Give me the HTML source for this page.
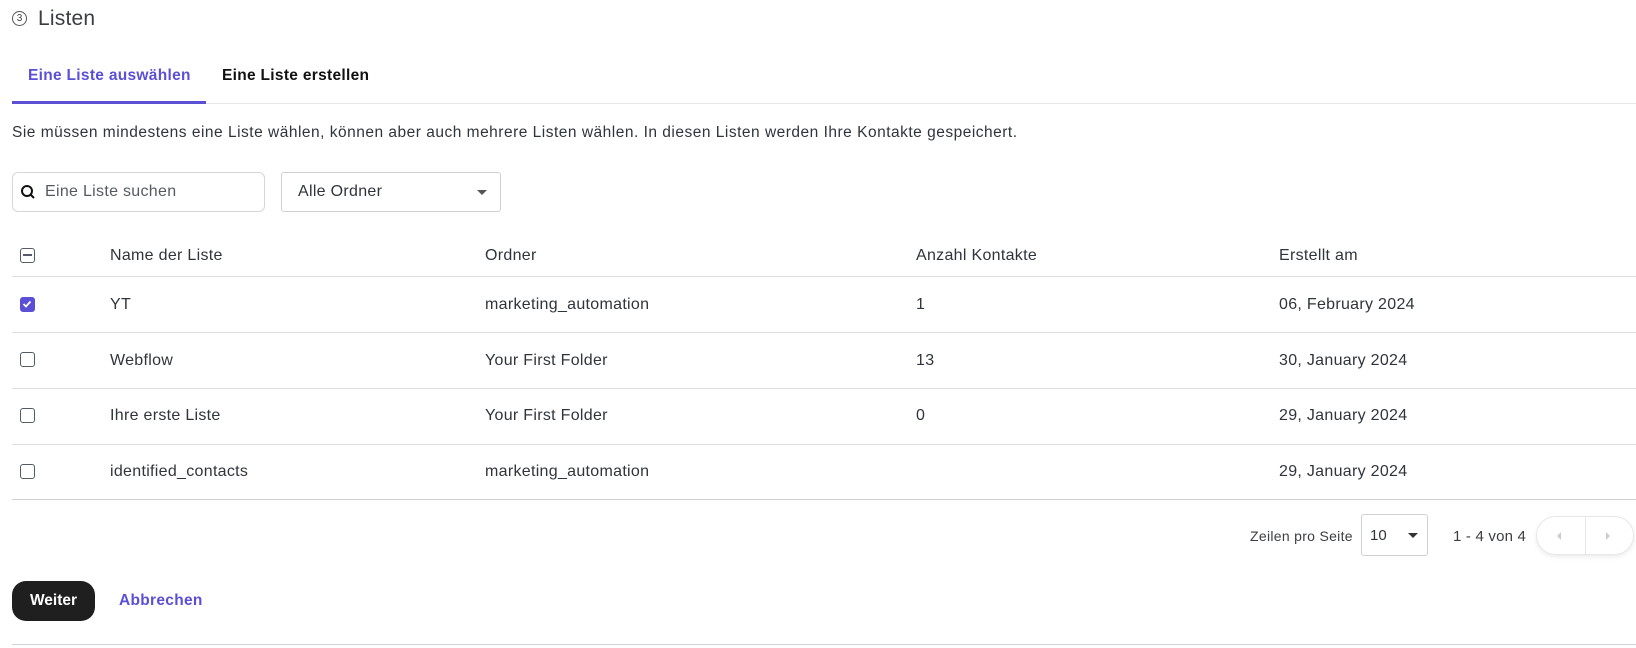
<!DOCTYPE html>
<html><head><meta charset="utf-8"><style>
*{box-sizing:border-box;margin:0;padding:0}
body{width:1636px;height:648px;background:#fff;font-family:"Liberation Sans",sans-serif;color:#1f2328;position:relative;overflow:hidden}
.a{position:absolute;white-space:nowrap}
.line{position:absolute;height:1px;background:#dcdde0}
.cb{position:absolute;width:15px;height:15px;border:1.5px solid #555b66;border-radius:3px;left:20px}
.cell{position:absolute;font-size:16px;letter-spacing:0.3px;color:#30343b;transform:translateY(-50%)}
</style></head><body>
<div class="a" style="left:12px;top:11px;width:15px;height:15px;border:1.2px solid #555;border-radius:50%;font-size:10px;line-height:13px;text-align:center;color:#444">3</div>
<div class="a" style="left:38px;top:7px;font-size:21px;letter-spacing:0.2px;color:#3a3d42">Listen</div>

<div class="a" style="left:28px;top:67px;font-size:15.5px;letter-spacing:0.3px;font-weight:bold;color:#5b4fd6">Eine Liste auswählen</div>
<div class="a" style="left:222px;top:67px;font-size:15.5px;letter-spacing:0.3px;font-weight:bold;color:#111">Eine Liste erstellen</div>
<div class="line" style="left:12px;top:103px;width:1624px;background:#e6e7ea"></div>
<div class="a" style="left:12px;top:101px;width:194px;height:3px;background:#5b4fd6"></div>

<div class="a" style="left:12px;top:124px;font-size:15.5px;letter-spacing:0.5px;color:#30343b">Sie müssen mindestens eine Liste wählen, können aber auch mehrere Listen wählen. In diesen Listen werden Ihre Kontakte gespeichert.</div>

<div class="a" style="left:12px;top:172px;width:253px;height:40px;border:1px solid #d4d6da;border-radius:6px"></div>
<svg class="a" style="left:20px;top:184px" width="16" height="16" viewBox="0 0 16 16"><circle cx="7" cy="7" r="5" fill="none" stroke="#111" stroke-width="2"/><path d="M10.5 10.5L14 14" stroke="#111" stroke-width="2"/></svg>
<div class="a" style="left:45px;top:183px;font-size:16px;letter-spacing:0.3px;color:#555a62">Eine Liste suchen</div>

<div class="a" style="left:281px;top:172px;width:220px;height:40px;border:1px solid #cfd1d5;border-radius:3px"></div>
<div class="a" style="left:298px;top:183px;font-size:16px;letter-spacing:0.3px;color:#30343b">Alle Ordner</div>
<div class="a" style="left:477px;top:190px;border-left:5px solid transparent;border-right:5px solid transparent;border-top:5px solid #555"></div>

<div class="cb" style="top:248px"><div style="position:absolute;left:2px;right:2px;top:5px;height:1.5px;background:#555b66"></div></div>
<div class="cell" style="left:110px;top:256px">Name der Liste</div>
<div class="cell" style="left:485px;top:256px">Ordner</div>
<div class="cell" style="left:916px;top:256px">Anzahl Kontakte</div>
<div class="cell" style="left:1279px;top:256px">Erstellt am</div>
<div class="line" style="left:12px;top:276px;width:1624px"></div>

<div class="cb" style="top:297px;background:#5b4fd6;border-color:#5b4fd6"><svg width="12" height="12" viewBox="0 0 12 12" style="position:absolute;left:0;top:0"><path d="M2.5 6l2.5 2.5 4.5-5" fill="none" stroke="#fff" stroke-width="1.8"/></svg></div>
<div class="cell" style="left:110px;top:305px">YT</div>
<div class="cell" style="left:485px;top:305px">marketing_automation</div>
<div class="cell" style="left:916px;top:305px">1</div>
<div class="cell" style="left:1279px;top:305px">06, February 2024</div>
<div class="line" style="left:12px;top:332px;width:1624px"></div>

<div class="cb" style="top:352px"></div>
<div class="cell" style="left:110px;top:361px">Webflow</div>
<div class="cell" style="left:485px;top:361px">Your First Folder</div>
<div class="cell" style="left:916px;top:361px">13</div>
<div class="cell" style="left:1279px;top:361px">30, January 2024</div>
<div class="line" style="left:12px;top:388px;width:1624px"></div>

<div class="cb" style="top:408px"></div>
<div class="cell" style="left:110px;top:416px">Ihre erste Liste</div>
<div class="cell" style="left:485px;top:416px">Your First Folder</div>
<div class="cell" style="left:916px;top:416px">0</div>
<div class="cell" style="left:1279px;top:416px">29, January 2024</div>
<div class="line" style="left:12px;top:444px;width:1624px"></div>

<div class="cb" style="top:464px"></div>
<div class="cell" style="left:110px;top:472px">identified_contacts</div>
<div class="cell" style="left:485px;top:472px">marketing_automation</div>
<div class="cell" style="left:1279px;top:472px">29, January 2024</div>
<div class="line" style="left:12px;top:499px;width:1624px;background:#cfd1d5"></div>

<div class="a" style="left:1250px;top:528px;font-size:14px;letter-spacing:0.3px;color:#3a3d42">Zeilen pro Seite</div>
<div class="a" style="left:1361px;top:514px;width:67px;height:42px;border:1px solid #cfd1d5;border-radius:3px"></div>
<div class="a" style="left:1370px;top:527px;font-size:15px;color:#30343b">10</div>
<div class="a" style="left:1408px;top:533px;border-left:5px solid transparent;border-right:5px solid transparent;border-top:5px solid #333"></div>
<div class="a" style="left:1453px;top:528px;font-size:15px;letter-spacing:0.2px;color:#3a3d42">1 - 4 von 4</div>
<div class="a" style="left:1536px;top:516px;width:98px;height:39px;border:1px solid #e6e7ea;border-radius:20px;box-shadow:0 2px 4px rgba(0,0,0,0.08)"></div>
<div class="a" style="left:1585px;top:516px;width:1px;height:39px;background:#e6e7ea"></div>
<div class="a" style="left:1557px;top:532px;border-top:4px solid transparent;border-bottom:4px solid transparent;border-right:4px solid #ccc"></div>
<div class="a" style="left:1606px;top:532px;border-top:4px solid transparent;border-bottom:4px solid transparent;border-left:4px solid #ccc"></div>

<div class="a" style="left:12px;top:581px;width:83px;height:40px;background:#1f1f1f;border-radius:14px;color:#fff;font-weight:bold;font-size:15.5px;line-height:40px;text-align:center">Weiter</div>
<div class="a" style="left:119px;top:592px;font-size:15.5px;letter-spacing:0.3px;font-weight:bold;color:#5b4fd6">Abbrechen</div>
<div class="line" style="left:12px;top:644px;width:1624px;background:#cfd1db"></div>
</body></html>
